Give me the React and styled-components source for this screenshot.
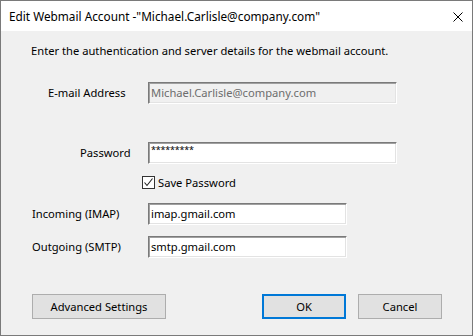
import React from "react";
import styled, { createGlobalStyle } from "styled-components";

const Global = createGlobalStyle`
  html, body { margin: 0; padding: 0; background: #f0f0f0; }
  * { box-sizing: border-box; }
`;

const Window = styled.div`
  width: 473px;
  height: 336px;
  border: 1px solid #7a7a7a;
  background: #f0f0f0;
  display: flex;
  flex-direction: column;
  font-family: "Noto Sans", "Open Sans", sans-serif;
  font-size: 11.2px;
  color: #000;
`;

const TitleBar = styled.div`
  height: 30px;
  background: #fff;
  display: flex;
  align-items: center;
  justify-content: space-between;
  padding: 0 9px 0 8px;
  flex-shrink: 0;
`;

const Title = styled.span`
  font-size: 11.8px;
  line-height: 16px;
`;

const CloseIcon = styled.svg`
  width: 10px;
  height: 10px;
  margin-top: 1px;
`;

const Body = styled.div`
  flex: 1;
  display: flex;
  flex-direction: column;
  padding-top: 12px;
`;

const Intro = styled.div`
  padding-left: 30px;
  line-height: 16px;
`;

const Row = styled.div`
  display: flex;
  align-items: center;
  height: 22px;
  margin-top: ${(p) => p.$gap}px;
`;

const Label = styled.div`
  width: 147px;
  flex-shrink: 0;
  padding-left: ${(p) => p.$indent}px;
  line-height: 16px;
  white-space: nowrap;
`;

const Field = styled.div`
  width: ${(p) => p.$w}px;
  height: 22px;
  border: 1px solid;
  border-color: #7a7a7a #ffffff #ffffff #7a7a7a;
  box-shadow: inset 1px 1px 0 #a0a0a0, inset -1px -1px 0 #e3e3e3;
  background: ${(p) => (p.$disabled ? "#f0f0f0" : "#ffffff")};
  color: ${(p) => (p.$disabled ? "#6d6d6d" : "#000")};
  padding: 2px 0 0 2px;
  line-height: 16px;
  white-space: nowrap;
  overflow: hidden;
`;

const Mask = styled.span`
  display: inline-block;
  vertical-align: top;
  font-size: 9px;
  line-height: 9px;
  letter-spacing: -0.2px;
`;

const CheckRow = styled.label`
  display: flex;
  align-items: center;
  height: 16px;
  margin-top: ${(p) => p.$gap}px;
  padding-left: 141px;
  gap: 3px;
`;

const CheckBox = styled.span`
  width: 13px;
  height: 13px;
  border: 1px solid #333;
  background: #fff;
  display: flex;
  align-items: center;
  justify-content: center;
`;

const Footer = styled.div`
  display: flex;
  align-items: center;
  margin-top: 36px;
  padding: 0 30px 0 31px;
`;

const Spacer = styled.div`
  flex: 1;
`;

const Button = styled.button`
  width: ${(p) => p.$w}px;
  height: 25px;
  margin-left: ${(p) => p.$ml || 0}px;
  background: #e1e1e1;
  border: ${(p) => (p.$default ? "2px solid #0078d7" : "1px solid #adadad")};
  font-family: inherit;
  font-size: 11.2px;
  color: #000;
  padding: 0;
  line-height: 16px;
`;

export default function App() {
  return (
    <>
      <Global />
      <Window>
        <TitleBar>
          <Title>Edit Webmail Account -"Michael.Carlisle@company.com"</Title>
          <CloseIcon viewBox="0 0 10 10">
            <path d="M0.5 0.5 L9.5 9.5 M9.5 0.5 L0.5 9.5" stroke="#000" strokeWidth="1" />
          </CloseIcon>
        </TitleBar>
        <Body>
          <Intro>Enter the authentication and server details for the webmail account.</Intro>
          <Row $gap={23}>
            <Label $indent={47}>E-mail Address</Label>
            <Field $w={249} $disabled>Michael.Carlisle@company.com</Field>
          </Row>
          <Row $gap={38}>
            <Label $indent={79}>Password</Label>
            <Field $w={249}><Mask>*********</Mask></Field>
          </Row>
          <CheckRow $gap={10}>
            <CheckBox>
              <svg width="11" height="11" viewBox="0 0 11 11">
                <path d="M1.5 5.5 L4 8.5 L9.5 1.5" fill="none" stroke="#222" strokeWidth="1.1" />
              </svg>
            </CheckBox>
            Save Password
          </CheckRow>
          <Row $gap={13}>
            <Label $indent={31}>Incoming (IMAP)</Label>
            <Field $w={199}>imap.gmail.com</Field>
          </Row>
          <Row $gap={11}>
            <Label $indent={31}>Outgoing (SMTP)</Label>
            <Field $w={199}>smtp.gmail.com</Field>
          </Row>
          <Footer>
            <Button $w={134}>Advanced Settings</Button>
            <Spacer />
            <Button $w={84} $default>OK</Button>
            <Button $w={84} $ml={12}>Cancel</Button>
          </Footer>
        </Body>
      </Window>
    </>
  );
}
